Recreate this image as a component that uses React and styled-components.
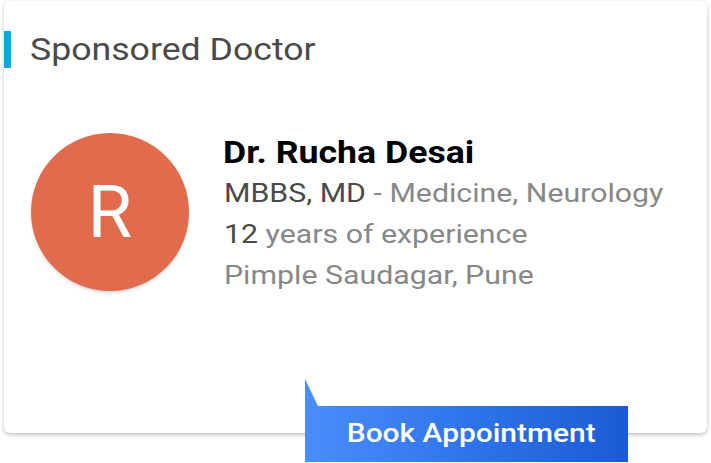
import React from "react";
import styled, { createGlobalStyle } from "styled-components";

const Global = createGlobalStyle`
  html, body { margin: 0; padding: 0; background: #ffffff; }
  body { font-family: Roboto, "Noto Sans", "Liberation Sans", sans-serif; overflow: hidden; }
`;

const Page = styled.div`
  width: 711px;
  height: 463px;
  padding: 1px 4px 0 4px;
  box-sizing: border-box;
  position: relative;
`;

const Card = styled.section`
  height: 432px;
  background: #fff;
  border-radius: 6px;
  box-shadow: 0 2px 4px rgba(0, 0, 0, 0.22), 0 0 2px rgba(0, 0, 0, 0.08);
  box-sizing: border-box;
  padding-top: 30px;
  display: flex;
  flex-direction: column;
`;

const Header = styled.div`
  display: flex;
  align-items: center;
  gap: 19px;
  height: 37px;
`;

const Accent = styled.div`
  width: 7px;
  height: 37px;
  background: #0ba9e0;
`;

const Wide = styled.span`
  display: inline-block;
  white-space: nowrap;
  transform: scaleX(${(p) => p.$k || 1.165});
  transform-origin: ${(p) => p.$origin || "left center"};
`;

const Title = styled.h2`
  margin: 0;
  font-size: 31px;
  font-weight: 400;
  color: #4a4a4a;
  line-height: 37px;
`;

const Body = styled.div`
  display: flex;
  align-items: flex-start;
  padding: 65px 0 0 27px;
  gap: 34px;
`;

const Avatar = styled.div`
  width: 158px;
  height: 158px;
  border-radius: 50%;
  background: #e06b4d;
  color: #fff;
  display: flex;
  align-items: center;
  justify-content: center;
  font-size: 72px;
  font-weight: 400;
  box-shadow: 0 2px 3px rgba(0, 0, 0, 0.15);
  flex: none;
`;

const Info = styled.div`
  display: flex;
  flex-direction: column;
`;

const Name = styled.div`
  font-size: 31px;
  font-weight: 700;
  color: #000;
  line-height: 40px;
  margin-left: 0px;
`;

const Line = styled.div`
  font-size: 26px;
  line-height: 41px;
  color: #888;
  margin-left: 1px;
`;

const Strong = styled.span`
  color: #4a4a4a;
`;

const BookButton = styled.button`
  position: absolute;
  left: 305px;
  top: 406px;
  width: 323px;
  height: 56px;
  border: 0;
  margin: 0;
  padding: 0 0 2px 9px;
  background: linear-gradient(90deg, #4a8efb 0%, #2f74ea 50%, #1a5bd5 100%);
  color: #fff;
  font-family: Roboto, "Noto Sans", sans-serif;
  font-size: 26px;
  font-weight: 500;
  display: flex;
  align-items: center;
  justify-content: center;
  cursor: pointer;

  &::before {
    content: "";
    position: absolute;
    left: 0;
    top: -27px;
    width: 13px;
    height: 27px;
    background: #4a8efb;
    clip-path: polygon(0 0, 0 100%, 100% 100%);
  }
`;

export default function App() {
  return (
    <>
      <Global />
      <Page>
        <Card>
          <Header>
            <Accent />
            <Title>
              <Wide $k={1.15}>Sponsored Doctor</Wide>
            </Title>
          </Header>
          <Body>
            <Avatar>R</Avatar>
            <Info>
              <Name>
                <Wide $k={1.15}>Dr. Rucha Desai</Wide>
              </Name>
              <Line>
                <Wide>
                  <Strong>MBBS, MD</Strong> - Medicine, Neurology
                </Wide>
              </Line>
              <Line>
                <Wide>
                  <Strong>12</Strong> years of experience
                </Wide>
              </Line>
              <Line>
                <Wide>Pimple Saudagar, Pune</Wide>
              </Line>
            </Info>
          </Body>
        </Card>
        <BookButton>
          <Wide $k={1.15} $origin="center">Book Appointment</Wide>
        </BookButton>
      </Page>
    </>
  );
}
